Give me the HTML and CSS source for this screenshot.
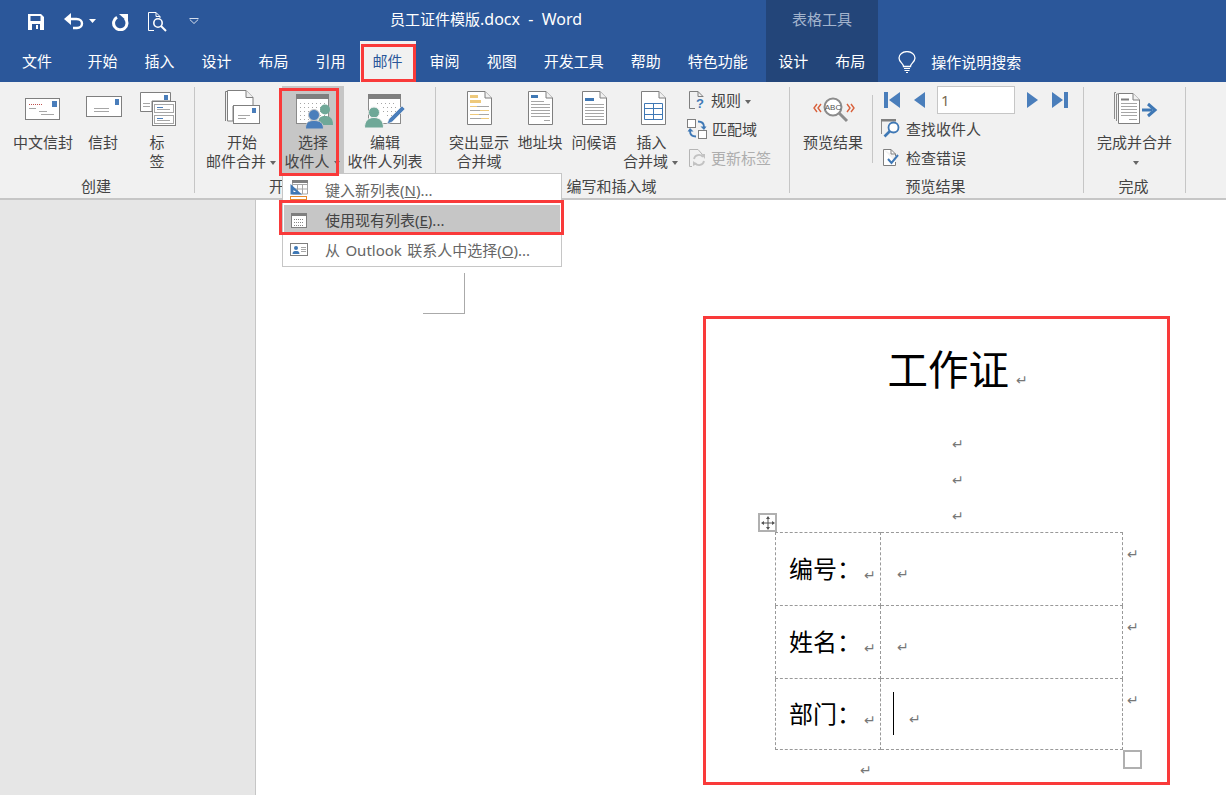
FILE: index.html
```html
<!DOCTYPE html>
<html lang="zh-CN">
<head>
<meta charset="utf-8">
<title>员工证件模版.docx - Word</title>
<link rel="stylesheet" href="styles.css">
</head>
<body>
<div class="app">
  <header class="titlebar">
    <div class="qat">
      <svg class="qa qa-save" width="16" height="16" viewBox="0 0 16 16"><path d="M0 0H13L16 3V16H0Z" fill="#fff"/><rect x="2.500" y="2" width="10" height="5" fill="#2b579a"/><rect x="4" y="10" width="8" height="6" fill="#2b579a"/><rect x="8" y="11" width="2" height="4" fill="#fff"/></svg>
      <svg class="qa qa-undo" width="20" height="18" viewBox="0 0 20 18"><path d="M3 6H12.500C16 6 18 8 18 10.500S16 15 13 15H9" fill="none" stroke="#fff" stroke-width="2.400"/><path d="M0 6L7 0V12Z" fill="#fff"/></svg>
      <svg class="qa qa-caret" width="7" height="4" viewBox="0 0 7 4"><path d="M0 0H7L3.500 4Z" fill="#fff"/></svg>
      <svg class="qa qa-redo" width="18" height="18" viewBox="0 0 18 18"><path d="M6 4.200A6.700 6.700 0 1 0 14.200 5.500" fill="none" stroke="#fff" stroke-width="3"/><path d="M8 1H17V9Z" fill="#fff"/></svg>
      <svg class="qa qa-prev" width="19" height="20" viewBox="0 0 19 20"><path d="M.5.500H8L12 4.500V6M.5.500V18.500H6M8 .5V4.500H12" fill="none" stroke="#fff"/><circle cx="10" cy="11" r="4.200" fill="none" stroke="#fff" stroke-width="1.600"/><path d="M13 14L18 19" stroke="#fff" stroke-width="2"/></svg>
      <svg class="qa qa-more" width="10" height="6" viewBox="0 0 10 6"><path d="M.5.500H9.500M.8 1.500L5 5.500 9.200 1.500" fill="none" stroke="#d5deec"/></svg>
    </div>
    <div class="doc-title">员工证件模版<span class="latin">.docx&nbsp; -&nbsp; Word</span></div>
    <div class="context-title">表格工具</div>
  </header>

  <nav class="tabs">
    <span class="tab tab-file">文件</span>
    <span class="tab">开始</span>
    <span class="tab">插入</span>
    <span class="tab">设计</span>
    <span class="tab">布局</span>
    <span class="tab">引用</span>
    <span class="tab tab-active">邮件</span>
    <span class="tab">审阅</span>
    <span class="tab">视图</span>
    <span class="tab">开发工具</span>
    <span class="tab">帮助</span>
    <span class="tab">特色功能</span>
    <div class="context-tabs">
      <span class="tab">设计</span>
      <span class="tab">布局</span>
    </div>
    <div class="tell-me">
      <svg width="18" height="22" viewBox="0 0 18 22"><path d="M5.500 15C5.500 12 1 10.500 1 6.500A7.500 6 0 0 1 17 6.500C17 10.500 12.500 12 12.500 15Z" fill="none" stroke="#fff" stroke-width="1.300" transform="translate(0 .5)"/><path d="M6 17.500H12M6.500 19.500H11.500M8 21.500H10" stroke="#fff" stroke-width="1.200"/></svg>
      <span>操作说明搜索</span>
    </div>
  </nav>

  <section class="ribbon">
    <div class="group g-create">
      <div class="group-body">
        <div class="btn w66">
          <svg class="ico" width="48" height="42" viewBox="0 0 48 42"><rect x="6.500" y="9.500" width="34" height="21" fill="#fff" stroke="#7f7f7f"/><rect x="33" y="12" width="5" height="6" fill="#4a7ebb"/><path d="M10 15.500H24" stroke="#c0504d" stroke-dasharray="1 1"/><path d="M10 19.500H17M20 22.500H28M22 25.500H35" stroke="#a6a6a6"/></svg>
          <span class="lbl">中文信封</span>
        </div>
        <div class="btn w54">
          <svg class="ico" width="48" height="42" viewBox="0 0 48 42"><rect x="7.500" y="7.500" width="35" height="20" fill="#fff" stroke="#7f7f7f"/><rect x="36" y="10" width="4" height="6" fill="#4a7ebb"/><path d="M15 19.500H30M15 22.500H30" stroke="#a6a6a6"/></svg>
          <span class="lbl">信封</span>
        </div>
        <div class="btn w54">
          <svg class="ico" width="48" height="42" viewBox="0 0 48 42"><path d="M7.500 3.500H37.500V12H19V22.500H7.500Z" fill="#fff" stroke="#7f7f7f"/><rect x="31" y="6" width="4" height="5" fill="#4a7ebb"/><path d="M10 14.500H17M10 17.500H17" stroke="#a6a6a6"/><rect x="19.500" y="12.500" width="23" height="24" fill="#fff" stroke="#7f7f7f"/><rect x="21.500" y="15.500" width="19" height="8" fill="#fff" stroke="#a6a6a6"/><rect x="21.500" y="26.500" width="19" height="8" fill="#fff" stroke="#a6a6a6"/><path d="M24 18.500H30M24 29.500H30" stroke="#4a7ebb"/><path d="M24 20.500H37M24 31.500H37" stroke="#a6a6a6"/></svg>
          <span class="lbl">标<br>签</span>
        </div>
      </div>
      <div class="group-label">创建</div>
    </div>

    <div class="group g-start">
      <div class="group-body">
        <div class="btn w80">
          <svg class="ico" width="48" height="42" viewBox="0 0 48 42"><path d="M7.500 32V2.500H9" fill="none" stroke="#7f7f7f"/><path d="M9.500 32V1.500H28L35 8.500V17H15V32Z" fill="#fff" stroke="#7f7f7f"/><path d="M28 1.500V8.500H35" fill="#eee" stroke="#7f7f7f"/><rect x="15.500" y="16.500" width="26" height="18" fill="#fff" stroke="#7f7f7f"/><rect x="34" y="19" width="4" height="5" fill="#4a7ebb"/><path d="M20 26.500H32M20 29.500H28" stroke="#a6a6a6"/></svg>
          <span class="lbl">开始<br>邮件合并<i class="caret"></i></span>
        </div>
        <div class="btn w62 btn-hot">
          <svg class="ico" width="48" height="42" viewBox="0 0 48 42"><rect x="7.500" y="5.500" width="32" height="29" fill="#fff" stroke="#8a8a8a"/><rect x="7" y="5" width="33" height="5" fill="#7f7f7f"/><path d="M11 14.500H36M11 18.500H36M11 22.500H36M11 26.500H36M11 30.500H36" stroke="#a6a6a6" stroke-dasharray="1 3"/><circle cx="36" cy="20.500" r="5" fill="#6fa898"/><path d="M29 36C29 29 31 27 36 27S44 29 44 36Z" fill="#6fa898"/><circle cx="25" cy="26" r="5.500" fill="#4a7ebb" stroke="#c6c6c6"/><path d="M16.500 40C16.500 34 19 31.500 25 31.500S34.500 34 34.500 40Z" fill="#4a7ebb" stroke="#c6c6c6"/></svg>
          <span class="lbl">选择<br>收件人<i class="caret"></i></span>
        </div>
        <div class="btn w82">
          <svg class="ico" width="48" height="42" viewBox="0 0 48 42"><rect x="7.500" y="5.500" width="32" height="29" fill="#fff" stroke="#8a8a8a"/><rect x="7" y="5" width="33" height="5" fill="#7f7f7f"/><path d="M16 14.500H36M22 18.500H36M22 22.500H36M26 26.500H36" stroke="#a6a6a6" stroke-dasharray="1 3"/><circle cx="13" cy="23.500" r="5.500" fill="#6fa898" stroke="#f1f1f1"/><path d="M3.500 39C3.500 32 7 28.500 13 28.500S22.500 32 22.500 39Z" fill="#6fa898" stroke="#f1f1f1"/><path d="M26 35L28 30 41 17 44 20 31 33Z" fill="#4a7ebb" stroke="#f1f1f1" stroke-width=".6"/></svg>
          <span class="lbl">编辑<br>收件人列表</span>
        </div>
      </div>
      <div class="group-label">开始邮件合并</div>
    </div>

    <div class="group g-write">
      <div class="group-body">
        <div class="btn w72">
          <svg class="ico" width="48" height="42" viewBox="0 0 48 42"><path d="M12.500 2.500H30L36.500 9V35.500H12.500Z" fill="#fff" stroke="#7f7f7f"/><path d="M30 2.500V9H36.500" fill="#f1f1f1" stroke="#7f7f7f"/><rect x="15" y="6" width="8" height="3" fill="#eec97b"/><rect x="15" y="11" width="11" height="3" fill="#eec97b"/><path d="M15 17.500H22" stroke="#eec97b"/><path d="M22 17.500H34" stroke="#a6a6a6"/><path d="M15 21.500H25" stroke="#a6a6a6"/><path d="M25 21.500H34" stroke="#eec97b"/><path d="M15 25.500H24" stroke="#eec97b"/><path d="M24 25.500H34" stroke="#a6a6a6"/><path d="M15 29.500H26" stroke="#a6a6a6"/><path d="M26 29.500H34" stroke="#eec97b"/></svg>
          <span class="lbl">突出显示<br>合并域</span>
        </div>
        <div class="btn w50">
          <svg class="ico" width="48" height="42" viewBox="0 0 48 42"><path d="M12.500 2.500H30L36.500 9V35.500H12.500Z" fill="#fff" stroke="#7f7f7f"/><path d="M30 2.500V9H36.500" fill="#f1f1f1" stroke="#7f7f7f"/><rect x="15" y="6" width="7" height="3" fill="#3f78b5"/><path d="M15 12.500H28M15 15.500H34M15 18.500H34M15 21.500H34M15 24.500H34M15 27.500H34M28 31.500H34" stroke="#a6a6a6"/></svg>
          <span class="lbl">地址块</span>
        </div>
        <div class="btn w58">
          <svg class="ico" width="48" height="42" viewBox="0 0 48 42"><path d="M12.500 2.500H30L36.500 9V35.500H12.500Z" fill="#fff" stroke="#7f7f7f"/><path d="M30 2.500V9H36.500" fill="#f1f1f1" stroke="#7f7f7f"/><rect x="15" y="9" width="9" height="3" fill="#3f78b5"/><path d="M15 15.500H34M15 18.500H34M15 21.500H34M15 24.500H34M15 27.500H34M15 30.500H34" stroke="#a6a6a6"/></svg>
          <span class="lbl">问候语</span>
        </div>
        <div class="btn w57">
          <svg class="ico" width="48" height="42" viewBox="0 0 48 42"><path d="M13.500 2.500H31L37.500 9V35.500H13.500Z" fill="#fff" stroke="#7f7f7f"/><path d="M31 2.500V9H37.500" fill="#f1f1f1" stroke="#7f7f7f"/><path d="M16.500 14.500H34.500V30.500H16.500ZM16.500 19.500H34.500M16.500 25.500H34.500M25.500 14.500V30.500" fill="none" stroke="#3f78b5" stroke-width="1"/></svg>
          <span class="lbl">插入<br>合并域<i class="caret"></i></span>
        </div>
        <div class="small-col">
          <div class="small">
            <svg width="18" height="18" viewBox="0 0 18 18"><path d="M1.500.500H10L15 5.500V6M1.500.500V17.500H7" fill="none" stroke="#7f7f7f"/><path d="M10 .5V5.500H15" fill="none" stroke="#7f7f7f"/><text x="8" y="17" class="q">?</text></svg>
            <span>规则<i class="caret"></i></span>
          </div>
          <div class="small">
            <svg class="ico-match" width="20" height="20" viewBox="0 0 20 20"><rect x=".5" y=".5" width="8" height="8" fill="#fff" stroke="#7f7f7f"/><rect x="11.500" y="11.500" width="8" height="8" fill="#fff" stroke="#7f7f7f"/><path d="M11 2.500C15 2.500 17 4 17 8" fill="none" stroke="#3f78b5" stroke-width="1.800"/><path d="M13.500 7.500H19.500L17 11Z" fill="#3f78b5"/><path d="M9 17.500C5 17.500 3 16 3 12" fill="none" stroke="#3f78b5" stroke-width="1.800"/><path d="M.5 12.500H6.500L3 9Z" fill="#3f78b5"/></svg>
            <span>匹配域</span>
          </div>
          <div class="small is-off">
            <svg width="18" height="18" viewBox="0 0 18 18"><path d="M1.500.500H10L14 5M1.500.500V17.500H4" fill="none" stroke="#b5b5b5"/><path d="M6 10A5 5 0 0 1 15 8M16 12A5 5 0 0 1 7 14" fill="none" stroke="#c2c2c2" stroke-width="1.800"/><path d="M13 5L17 5V10ZM5 17L5 12 9 15Z" fill="#c2c2c2"/></svg>
            <span>更新标签</span>
          </div>
        </div>
      </div>
      <div class="group-label">编写和插入域</div>
    </div>

    <div class="group g-preview">
      <div class="group-body">
        <div class="btn w82 btn-preview">
          <svg class="ico" width="48" height="42" viewBox="0 0 48 42"><path d="M8 15L5 19 8 23M12 15L9 19 12 23M38 15L41 19 38 23M42 15L45 19 42 23" fill="none" stroke="#d9603b" stroke-width="1.400"/><circle cx="24" cy="18" r="8.500" fill="#fff" stroke="#8c8c8c" stroke-width="2"/><path d="M30 24L38 32" stroke="#8c8c8c" stroke-width="3"/><text x="24" y="21" class="abc">ABC</text></svg>
          <span class="lbl">预览结果</span>
        </div>
        <div class="vsep"></div>
        <div class="result-col">
          <div class="nav-row">
            <svg class="nav-first" width="16" height="16" viewBox="0 0 16 16"><path d="M0 0H4V16H0ZM16 0V16L5 8Z" fill="#4a7ebb"/></svg>
            <svg class="nav-prev" width="11" height="16" viewBox="0 0 11 16"><path d="M11 0V16L0 8Z" fill="#4a7ebb"/></svg>
            <div class="rec-input">1</div>
            <svg class="nav-next" width="11" height="16" viewBox="0 0 11 16"><path d="M0 0V16L11 8Z" fill="#4a7ebb"/></svg>
            <svg class="nav-last" width="16" height="16" viewBox="0 0 16 16"><path d="M0 0V16L11 8ZM12 0H16V16H12Z" fill="#4a7ebb"/></svg>
          </div>
          <div class="small">
            <svg width="20" height="20" viewBox="0 0 20 20"><path d="M.5 15V1H15" fill="none" stroke="#8a8a8a"/><rect width="15" height="2.500" fill="#7f7f7f"/><circle cx="12.500" cy="8.500" r="5" fill="#fff" stroke="#3f78b5" stroke-width="1.800"/><path d="M9 12L3.500 17.500" stroke="#3f78b5" stroke-width="2.600"/></svg>
            <span>查找收件人</span>
          </div>
          <div class="small">
            <svg width="20" height="18" viewBox="0 0 20 18"><path d="M2.500.500H10L14.500 5V7M2.500.500V16.500H14.500V13" fill="#fff" stroke="#7f7f7f"/><path d="M10 .5V5H14.500" fill="none" stroke="#7f7f7f"/><path d="M7 10L10.500 14 17 6" fill="none" stroke="#3f78b5" stroke-width="2"/></svg>
            <span>检查错误</span>
          </div>
        </div>
      </div>
      <div class="group-label">预览结果</div>
    </div>

    <div class="group g-finish">
      <div class="group-body">
        <div class="btn w-full">
          <svg class="ico" width="48" height="42" viewBox="0 0 48 42"><path d="M5.500 32V5H7M3.500 30V3.500H5" fill="none" stroke="#8a8a8a"/><path d="M7.500 4.500H22L28.500 11V34.500H7.500Z" fill="#fff" stroke="#7f7f7f"/><path d="M22 4.500V11H28.500" fill="#f1f1f1" stroke="#7f7f7f"/><path d="M10 10.500H18" stroke="#7f7f7f" stroke-width="2"/><path d="M10 14.500H26M10 17.500H26M10 20.500H26M10 23.500H26M10 26.500H26M18 30.500H26" stroke="#a6a6a6"/><path d="M31 21H41" stroke="#3f78b5" stroke-width="3"/><path d="M37 15L44 21 37 27" fill="none" stroke="#3f78b5" stroke-width="3"/></svg>
          <span class="lbl">完成并合并<br><i class="caret caret-solo"></i></span>
        </div>
      </div>
      <div class="group-label">完成</div>
    </div>
  </section>

  <main class="workspace">
    <aside class="gutter"></aside>
    <div class="page">
      <div class="crop-mark"></div>
      <article class="card">
        <h1 class="card-title">工作证<span class="pm pm-title">↵</span></h1>
        <p class="empty-line"><span class="pm">↵</span></p>
        <p class="empty-line"><span class="pm">↵</span></p>
        <p class="empty-line"><span class="pm">↵</span></p>
        <div class="table-wrap">
          <div class="handle-move">
            <svg width="14" height="14" viewBox="0 0 14 14"><path d="M7 1V13M1 7H13" stroke="#555" stroke-width="1"/><path d="M7 0L9 3H5ZM7 14L5 11H9ZM0 7L3 5V9ZM14 7L11 9V5Z" fill="#555"/></svg>
          </div>
          <table class="info">
            <tr class="r1"><td class="c1">编号：<span class="pm">↵</span></td><td class="c2"><span class="pm">↵</span></td><td class="c3"><span class="pm">↵</span></td></tr>
            <tr class="r2"><td class="c1">姓名：<span class="pm">↵</span></td><td class="c2"><span class="pm">↵</span></td><td class="c3"><span class="pm">↵</span></td></tr>
            <tr class="r3"><td class="c1">部门：<span class="pm">↵</span></td><td class="c2"><i class="cursor"></i><span class="pm">↵</span></td><td class="c3"><span class="pm">↵</span></td></tr>
          </table>
          <div class="handle-size"></div>
        </div>
        <p class="last-line"><span class="pm">↵</span></p>
      </article>
    </div>
  </main>

  <div class="menu">
    <div class="menu-item">
      <svg width="20" height="21" viewBox="0 0 20 21"><path d="M3.500 .5H18.500V14H3.500ZM3.500 4.500H18.500M8.500 4.500V14M13.500 4.500V14M3.500 9H18.500" fill="#fff" stroke="#a6a6a6"/><rect x="3" y="0" width="16" height="3" fill="#7f7f7f"/><path d="M1.500 4V14.500H13Z" fill="#3f78b5"/><path d="M4.500 10V12H7Z" fill="#fff"/><rect x="1.500" y="16.500" width="16" height="3" fill="#fff" stroke="#e8892b"/></svg>
      <span>键入新列表(<u>N</u>)...</span>
    </div>
    <div class="menu-item is-hot">
      <svg width="18" height="15" viewBox="0 0 18 15"><rect x="1.500" y=".5" width="15" height="14" fill="#fff" stroke="#7f7f7f"/><rect x="1" width="16" height="3" fill="#7f7f7f"/><path d="M4 6.500H14M4 9.500H14M4 12.500H14" stroke="#888" stroke-dasharray="1 1"/></svg>
      <span>使用现有列表(<u>E</u>)...</span>
    </div>
    <div class="menu-item">
      <svg width="18" height="15" viewBox="0 0 18 15"><rect x=".5" y=".5" width="17" height="12" fill="#fff" stroke="#7f7f7f"/><circle cx="6" cy="5" r="2" fill="#3f78b5"/><path d="M2.500 11C2.500 8.500 4 8 6 8S9.500 8.500 9.500 11Z" fill="#3f78b5"/><path d="M11 4.500H16M11 6.500H16M11 8.500H16" stroke="#a6a6a6"/></svg>
      <span class="spaced">从 Outlook 联系人中选择(<u>O</u>)...</span>
    </div>
  </div>

  <div class="mark mark-tab"></div>
  <div class="mark mark-btn"></div>
  <div class="mark mark-item"></div>
</div>
</body>
</html>
```
FILE: styles.css
```css
* { box-sizing: border-box; }
html, body { margin: 0; padding: 0; }
body {
  width: 1226px;
  height: 795px;
  overflow: hidden;
  font-family: "Noto Sans", "Noto Sans CJK SC", sans-serif;
  font-size: 15px;
  color: #444;
  background: #fff;
}
.app { position: relative; width: 1226px; height: 795px; overflow: hidden; display: flex; flex-direction: column; }

/* title bar */
.titlebar { height: 41px; background: #2b579a; display: flex; color: #fff; flex: none; }
.qat { width: 390px; display: flex; align-items: flex-start; }
.qa { display: block; flex: none; }
.qa-save { margin: 14px 0 0 28px; }
.qa-undo { margin: 13px 0 0 20px; }
.qa-caret { margin: 19px 0 0 5px; }
.qa-redo { margin: 13px 0 0 15px; }
.qa-prev { margin: 12px 0 0 19px; }
.qa-more { margin: 18px 0 0 22px; }
.doc-title { width: 376px; line-height: 38px; white-space: nowrap; }
.latin { font-size: 16px; }
.context-title { width: 112px; background: #234579; color: #a3b4cd; line-height: 38px; text-align: center; font-size: 15px; }

/* tabs */
.tabs { height: 41px; background: #2b579a; display: flex; padding-left: 9px; gap: 1px; color: #fff; flex: none; }
.tab { padding: 0 13px; line-height: 40px; white-space: nowrap; }
.tab-file { margin-right: 8.500px; }
.tab-active { background: #f1f1f1; color: #2b579a; }
.context-tabs { margin-left: 4.500px; width: 112px; background: #234579; display: flex; gap: 3px; }
.context-tabs .tab { padding: 0 12px; }
.tell-me { display: flex; align-items: center; margin-left: 19px; gap: 15px; }

/* ribbon */
.ribbon { height: 118px; background: #f1f1f1; border-bottom: 2px solid #c6c6c6; display: flex; align-items: flex-start; padding-top: 5px; flex: none; }
.group { height: 106px; border-right: 1px solid #c6c6c6; display: flex; flex-direction: column; flex: none; }
.g-create { width: 195px; }
.g-create .group-body { padding-left: 10px; }
.g-start { width: 241px; }
.g-start .group-body { padding-left: 7px; }
.g-write { width: 354px; }
.g-write .group-body { padding-left: 7px; }
.g-preview { width: 294px; }
.g-finish { width: 102px; }
.group-body { height: 90px; display: flex; flex: none; }
.group-label { flex: none; line-height: 19px; text-align: center; color: #444; white-space: nowrap; padding-right: 2px; }

.btn { padding-top: 3px; display: flex; flex-direction: column; align-items: center; text-align: center; flex: none; white-space: nowrap; height: 87px; margin-top: -1px; }
.ico { display: block; flex: none; }
.lbl { display: block; line-height: 19px; margin-top: 2px; }
.w50 { width: 50px; } .w54 { width: 54px; } .w57 { width: 57px; } .w58 { width: 58px; }
.w62 { width: 62px; } .w66 { width: 66px; } .w72 { width: 72px; } .w80 { width: 80px; } .w82 { width: 82px; }
.w-full { width: 100%; }
.btn-hot { background: #c6c6c6; }
.btn-preview { padding-left: 4px; }
.caret { display: inline-block; width: 0; height: 0; border: 3px solid transparent; border-top: 4px solid #666; border-bottom: 0; margin: 0 2px 0 4px; vertical-align: middle; }
.caret-solo { margin: 0 0 0 3px; }

.small-col { display: flex; flex-direction: column; margin-left: 8px; margin-top: -2px; }
.small { height: 29px; flex: none; display: flex; align-items: center; gap: 5px; white-space: nowrap; }
.small svg { display: block; flex: none; }
.small .ico-match { margin-left: -1px; }
.is-off { color: #aeaeae; }
.q { font: bold 13px "Liberation Sans", sans-serif; fill: #3f78b5; }
.abc { font: 8px "Liberation Sans", sans-serif; fill: #555; text-anchor: middle; }

.vsep { width: 1px; height: 68px; margin-top: 8px; background: #c6c6c6; flex: none; }
.result-col { padding-left: 8px; margin-top: -2px; display: flex; flex-direction: column; }
.nav-row { height: 29px; display: flex; align-items: center; flex: none; }
.nav-row svg { flex: none; display: block; }
.nav-first { margin-left: 3px; }
.nav-prev { margin-left: 14px; }
.rec-input { width: 78px; height: 28px; margin-left: 12px; background: #fff; border: 1px solid #c6c6c6; padding-left: 3px; line-height: 27px; color: #7a6a50; font-size: 15px; }
.nav-next { margin-left: 12px; }
.nav-last { margin-left: 14px; }

/* workspace */
.workspace { flex: 1; display: flex; min-height: 0; }
.gutter { width: 256px; background: #e6e6e6; border-right: 1px solid #c6c6c6; flex: none; }
.page { flex: 1; position: relative; background: #fff; padding: 116px 0 0 447px; }
.crop-mark { position: absolute; left: 167px; top: 73px; width: 42px; height: 41px; border-right: 1px solid #aaa; border-bottom: 1px solid #aaa; }

.card { width: 467px; height: 469px; border: 3px solid #f93a3a; padding-left: 69px; color: #000; }
.card-title { margin: 23px 0 0; font-weight: 400; font-size: 40.500px; line-height: 56px; height: 56px; padding-left: 112.500px; white-space: nowrap; }
.pm { font: 14px "DejaVu Sans", sans-serif; color: #777; }
.pm-title { margin-left: 7px; }
.empty-line { margin: 0; height: 36px; line-height: 36px; padding-left: 177px; }
.card-title + .empty-line { margin-top: 27px; }

.table-wrap { position: relative; margin-top: -1px; }
.info { border-collapse: collapse; table-layout: fixed; width: 377px; font-size: 24px; color: #000; }
.info td { padding: 0; }
.r1 { height: 73px; } .r2 { height: 73px; } .r3 { height: 71px; }
.info .c1 { width: 105px; border: 1px dashed #999; padding: 0 0 3px 13px; white-space: nowrap; }
.c1 .pm { margin-left: 3px; vertical-align: -2px; }
.info .c2 { width: 242px; border: 1px dashed #999; padding-left: 16px; }
.c2 .pm { position: relative; top: 0; }
.info .c3 { width: 30px; border: 0; padding-left: 4px; vertical-align: top; }
.c3 .pm { display: block; line-height: 12px; margin-top: 15px; }
.cursor { position: absolute; width: 1px; height: 43px; background: #000; margin: -6px 0 0 -16px; }
.info .r3 .c2 { padding-left: 28px; }
.handle-move { position: absolute; left: -17px; top: -19px; width: 19px; height: 19px; border: 2px solid #b0b0b0; background: #fff; display: flex; align-items: center; justify-content: center; }
.handle-size { position: absolute; left: 348px; top: 218px; width: 19px; height: 19px; border: 2px solid #b0b0b0; background: #fff; }
.last-line { margin: 12px 0 0 85px; line-height: 14px; }

/* menu */
.menu { position: absolute; left: 282px; top: 173px; width: 280px; height: 94px; background: #fff; border: 1px solid #c6c6c6; padding: 1px; color: #666; }
.menu-item { height: 30px; display: flex; align-items: center; padding-left: 5px; white-space: nowrap; }
.menu-item svg { width: 20px; flex: none; margin-right: 16px; }
.menu-item span { padding-bottom: 2px; }
.is-hot { background: #c6c6c6; color: #444; }
.spaced { word-spacing: 1.500px; }

/* callouts */
.mark { position: absolute; border: 3px solid #f93a3a; pointer-events: none; }
.mark-tab { left: 361px; top: 44px; width: 55px; height: 38px; }
.mark-btn { left: 279px; top: 88px; width: 60px; height: 88px; }
.mark-item { left: 279px; top: 200px; width: 285px; height: 35px; }
```
